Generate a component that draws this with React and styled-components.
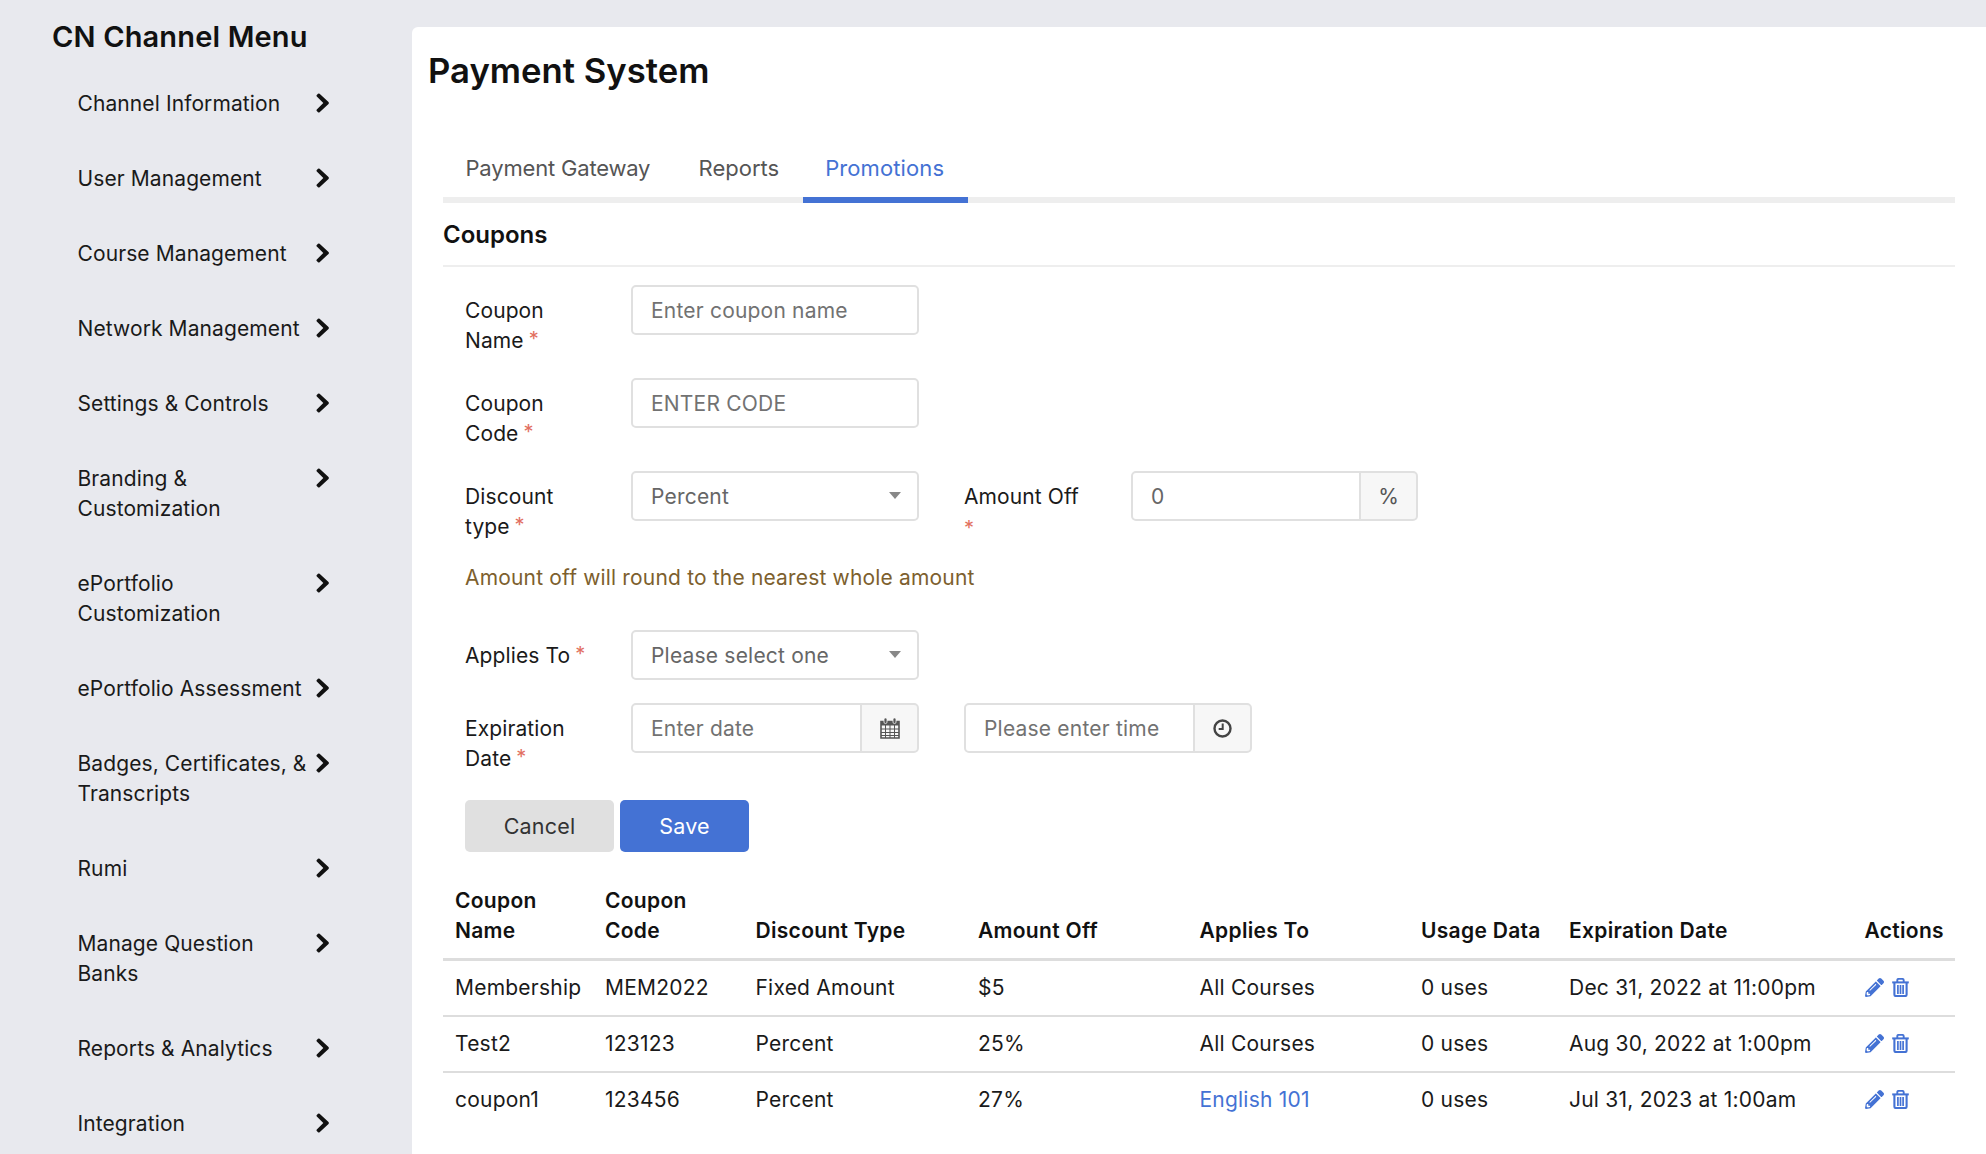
import React from "react";
import styled, { createGlobalStyle } from "styled-components";
import { FaPencilAlt } from "react-icons/fa";

const Global = createGlobalStyle`
  html, body { margin: 0; padding: 0; height: 100%; overflow: hidden; background: #e8e9ee; }
  body { font-family: "Inter", "Liberation Sans", sans-serif; color: #1c1c1e; }
  * { box-sizing: border-box; }
`;

const Page = styled.div`
  display: grid;
  grid-template-columns: 412px 1fr;
  height: 1154px;
  width: 1986px;
  overflow: hidden;
`;

const Sidebar = styled.nav`
  padding: 18px 0 0 52px;
`;

const SideTitle = styled.h2`
  margin: 0 0 33px;
  font-size: 29px;
  font-weight: 600;
  line-height: 38px;
  letter-spacing: 0.15px;
  color: #111;
`;

const SideItem = styled.div`
  display: flex;
  justify-content: space-between;
  align-items: flex-start;
  width: 252px;
  margin-left: 25.5px;
  margin-bottom: 45px;
  font-size: 21px;
  line-height: 30px;
  letter-spacing: 0.1px;
  color: #1a1a1a;
  svg { flex-shrink: 0; margin-top: 4px; }
`;

const SideText = styled.span`
  width: 235px;
`;

const Main = styled.main`
  margin-top: 27px;
  background: #fff;
  border-top-left-radius: 6px;
  padding: 19px 31px 0 16px;
`;

const Title = styled.h1`
  margin: 0;
  font-size: 34.7px;
  font-weight: 600;
  line-height: 48px;
  color: #111;
`;

const Content = styled.div`
  margin-left: 15px;
`;

const Tabs = styled.div`
  display: flex;
  margin-top: 57px;
  border-bottom: 6px solid #eee;
`;

const Tab = styled.div`
  padding: 0 ${(p) => p.$pr ?? 23.5}px 12px 22.5px;
  margin-bottom: -6px;
  font-size: 22px;
  line-height: 34px;
  letter-spacing: ${(p) => p.$ls ?? 0}px;
  color: ${(p) => (p.$active ? "#4472d4" : "#555")};
  border-bottom: 6px solid ${(p) => (p.$active ? "#4472d4" : "transparent")};
`;

const Section = styled.h3`
  margin: 16px 0 18px;
  padding-bottom: 14px;
  font-size: 24px;
  font-weight: 600;
  line-height: 32px;
  color: #111;
  border-bottom: 2px solid #eee;
`;

const Form = styled.div`
  padding-left: 22px;
`;

const FormRow = styled.div`
  display: flex;
  align-items: flex-start;
  margin-bottom: ${(p) => p.$mb ?? 22}px;
`;

const Label = styled.label`
  flex: none;
  width: ${(p) => p.$w ?? 166}px;
  margin-left: ${(p) => p.$ml ?? 0}px;
  padding: 11px ${(p) => p.$pr ?? 36}px 0 0;
  font-size: 21px;
  line-height: 30px;
  letter-spacing: 0.1px;
  color: #1a1a1a;
`;

const LabelLine = styled.span`
  display: block;
`;

const Star = styled.span`
  margin-left: 5px;
  color: #e2705f;
  font-size: 20px;
  position: relative;
  top: -2px;
  line-height: 1;
`;

const BlockStar = styled(Star)`
  display: block;
  margin-left: 0;
  height: 18px;
  top: 6px;
`;

const FieldInput = styled.input`
  flex: ${(p) => (p.$grow ? "1 1 0" : "none")};
  min-width: 0;
  width: ${(p) => (p.$grow ? "auto" : "288px")};
  height: 50px;
  padding: 1px 18px 0;
  border: 2px solid #e0e0e0;
  border-radius: ${(p) => (p.$grow ? "5px 0 0 5px" : "5px")};
  border-right-width: ${(p) => (p.$grow ? "1px" : "2px")};
  background: #fff;
  outline: none;
  font: inherit;
  font-size: 21px;
  letter-spacing: 0.2px;
  color: #666;
  &::placeholder { color: #727272; opacity: 1; }
`;

const SelectBox = styled.div`
  position: relative;
  width: 288px;
  &::after {
    content: "";
    position: absolute;
    top: 21px;
    right: 18px;
    border-left: 6px solid transparent;
    border-right: 6px solid transparent;
    border-top: 7px solid #888;
    pointer-events: none;
  }
`;

const Select = styled.select`
  appearance: none;
  display: block;
  width: 100%;
  height: 50px;
  padding: 0 18px;
  border: 2px solid #e0e0e0;
  border-radius: 5px;
  background: #fff;
  font: inherit;
  font-size: 21px;
  letter-spacing: 0.2px;
  color: #666;
`;

const Group = styled.div`
  display: flex;
  width: ${(p) => p.$w ?? 288}px;
  margin-left: ${(p) => p.$ml ?? 0}px;
`;

const Addon = styled.div`
  flex: none;
  width: ${(p) => p.$w ?? 58}px;
  height: 50px;
  display: flex;
  align-items: center;
  justify-content: center;
  border: 2px solid #e0e0e0;
  border-left-width: 1px;
  border-radius: 0 5px 5px 0;
  background: #f7f7f7;
  font-size: 21px;
  color: #555;
`;

const Helper = styled.div`
  margin: -1px 0 37px;
  font-size: 21px;
  line-height: 30px;
  letter-spacing: 0.17px;
  color: #7d5f2e;
`;

const Buttons = styled.div`
  display: flex;
  gap: 6px;
  margin-top: 26px;
`;

const Button = styled.button`
  height: 52px;
  width: ${(p) => p.$w}px;
  border: none;
  border-radius: 5px;
  font: inherit;
  font-size: 21.5px;
  letter-spacing: 0.2px;
  background: ${(p) => (p.$primary ? "#4472d4" : "#e0e0e0")};
  color: ${(p) => (p.$primary ? "#fff" : "#333")};
`;

const Table = styled.table`
  width: 1512px;
  margin-top: 34px;
  table-layout: fixed;
  border-collapse: separate;
  border-spacing: 0;
  font-size: 21px;
  letter-spacing: 0.22px;
`;

const Col = styled.col`
  width: ${(p) => p.$w}px;
`;

const Th = styled.th`
  padding: 0 4px 12px 12px;
  border-bottom: 3px solid #ddd;
  text-align: left;
  vertical-align: bottom;
  font-weight: 600;
  line-height: 30px;
  letter-spacing: 0.3px;
  color: #111;
`;

const Td = styled.td`
  height: ${(p) => (p.$last ? 54 : 56)}px;
  padding: 0 0 0 12px;
  border-bottom: ${(p) => (p.$last ? "none" : "2px solid #ddd")};
  white-space: nowrap;
  line-height: 30px;
  color: #1a1a1a;
`;

const Link = styled.a`
  color: #4472d4;
`;

const Actions = styled.div`
  display: flex;
  align-items: center;
  gap: 8px;
  margin-bottom: 2px;
  color: #4472d4;
  svg { display: block; }
`;

const ChevronIcon = () => (
  <svg width="14" height="20" viewBox="0 0 14 20" fill="#111" aria-hidden="true">
    <path d="M3.6 0.8 L12.5 9.1 Q13.4 10 12.5 10.9 L3.6 19.2 Q2.8 19.9 2 19.2 L0.8 18 Q0 17.2 0.8 16.4 L7.3 10 L0.8 3.6 Q0 2.8 0.8 2 L2 0.8 Q2.8 0.1 3.6 0.8 Z" />
  </svg>
);

const TrashIcon = () => (
  <svg width="17" height="19" viewBox="0 0 17 19" fill="none" stroke="currentColor" aria-hidden="true">
    <path d="M0.2 4.4h16.6" strokeWidth="2" />
    <path d="M5.3 4V2.2q0-1.3 1.3-1.3h3.8q1.3 0 1.3 1.3V4" strokeWidth="1.9" />
    <path d="M2.4 5v11.4q0 1.7 1.7 1.7h8.8q1.7 0 1.7-1.7V5" strokeWidth="2.1" />
    <path d="M5.9 7v9M8.5 7v9M11.1 7v9" strokeWidth="1.7" />
  </svg>
);

const CalendarIcon = () => (
  <svg width="20" height="22" viewBox="0 0 20 22" fill="none" aria-hidden="true">
    <path d="M1 4.5h18v16.5h-18z" stroke="#555" strokeWidth="1.6" />
    <path d="M1 5h18v3.5h-18z" fill="#555" />
    <path d="M1 12h18M1 15.5h18M1 18.5h18M5.5 8v13M10 8v13M14.5 8v13" stroke="#555" strokeWidth="1" />
    <rect x="4" y="1" width="3" height="5.5" rx="1.4" fill="#555" stroke="#f7f7f7" strokeWidth="0.8" />
    <rect x="13" y="1" width="3" height="5.5" rx="1.4" fill="#555" stroke="#f7f7f7" strokeWidth="0.8" />
  </svg>
);

const ClockIcon = () => (
  <svg width="19" height="19" viewBox="0 0 19 19" fill="none" aria-hidden="true">
    <circle cx="9.5" cy="9.5" r="8" stroke="#444" strokeWidth="2.4" />
    <path d="M9.7 4.5v5.5h-4" stroke="#444" strokeWidth="2" />
  </svg>
);

const RequiredLabel = ({ first, last }) => (
  <Label>
    {first && <LabelLine>{first}</LabelLine>}
    <LabelLine>{last}<Star>*</Star></LabelLine>
  </Label>
);

const menu = [
  "Channel Information",
  "User Management",
  "Course Management",
  "Network Management",
  "Settings & Controls",
  "Branding & Customization",
  "ePortfolio Customization",
  "ePortfolio Assessment",
  "Badges, Certificates, & Transcripts",
  "Rumi",
  "Manage Question Banks",
  "Reports & Analytics",
  "Integration",
];

const colWidths = [150, 150.5, 222.5, 221.5, 221.5, 148, 295.5, 102.5];
const headers = ["Coupon Name", "Coupon Code", "Discount Type", "Amount Off", "Applies To", "Usage Data", "Expiration Date", "Actions"];
const rows = [
  ["Membership", "MEM2022", "Fixed Amount", "$5", "All Courses", "0 uses", "Dec 31, 2022 at 11:00pm"],
  ["Test2", "123123", "Percent", "25%", "All Courses", "0 uses", "Aug 30, 2022 at 1:00pm"],
  ["coupon1", "123456", "Percent", "27%", "English 101", "0 uses", "Jul 31, 2023 at 1:00am"],
];

export default function App() {
  return (
    <Page>
      <Global />
      <Sidebar>
        <SideTitle>CN Channel Menu</SideTitle>
        {menu.map((t) => (
          <SideItem key={t}>
            <SideText>{t}</SideText>
            <ChevronIcon />
          </SideItem>
        ))}
      </Sidebar>
      <Main>
        <Title>Payment System</Title>
        <Content>
          <Tabs>
            <Tab $ls={-0.18} $pr={25.8}>Payment Gateway</Tab>
            <Tab>Reports</Tab>
            <Tab $active $ls={0.1}>Promotions</Tab>
          </Tabs>
          <Section>Coupons</Section>
          <Form>
            <FormRow>
              <RequiredLabel first="Coupon" last="Name" />
              <FieldInput placeholder="Enter coupon name" />
            </FormRow>
            <FormRow>
              <RequiredLabel first="Coupon" last="Code" />
              <FieldInput placeholder="ENTER CODE" />
            </FormRow>
            <FormRow>
              <RequiredLabel first="Discount" last="type" />
              <SelectBox>
                <Select defaultValue="Percent"><option>Percent</option></Select>
              </SelectBox>
              <Label $w={167} $pr={0} $ml={45}>Amount Off<BlockStar>*</BlockStar></Label>
              <Group $w={287}>
                <FieldInput $grow defaultValue="0" />
                <Addon>%</Addon>
              </Group>
            </FormRow>
            <Helper>Amount off will round to the nearest whole amount</Helper>
            <FormRow $mb={23}>
              <RequiredLabel last="Applies To" />
              <SelectBox>
                <Select defaultValue="one"><option value="one">Please select one</option></Select>
              </SelectBox>
            </FormRow>
            <FormRow $mb={0}>
              <RequiredLabel first="Expiration" last="Date" />
              <Group>
                <FieldInput $grow placeholder="Enter date" />
                <Addon><CalendarIcon /></Addon>
              </Group>
              <Group $ml={45}>
                <FieldInput $grow placeholder="Please enter time" />
                <Addon><ClockIcon /></Addon>
              </Group>
            </FormRow>
            <Buttons>
              <Button $w={149}>Cancel</Button>
              <Button $w={129} $primary>Save</Button>
            </Buttons>
          </Form>
          <Table>
            <colgroup>
              {colWidths.map((w, i) => <Col key={i} $w={w} />)}
            </colgroup>
            <thead>
              <tr>{headers.map((h) => <Th key={h}>{h}</Th>)}</tr>
            </thead>
            <tbody>
              {rows.map((r, ri) => (
                <tr key={r[0]}>
                  {r.map((c, ci) => (
                    <Td key={ci} $last={ri === rows.length - 1}>
                      {c === "English 101" ? <Link>{c}</Link> : c}
                    </Td>
                  ))}
                  <Td $last={ri === rows.length - 1}>
                    <Actions>
                      <FaPencilAlt size={19} />
                      <TrashIcon />
                    </Actions>
                  </Td>
                </tr>
              ))}
            </tbody>
          </Table>
        </Content>
      </Main>
    </Page>
  );
}
